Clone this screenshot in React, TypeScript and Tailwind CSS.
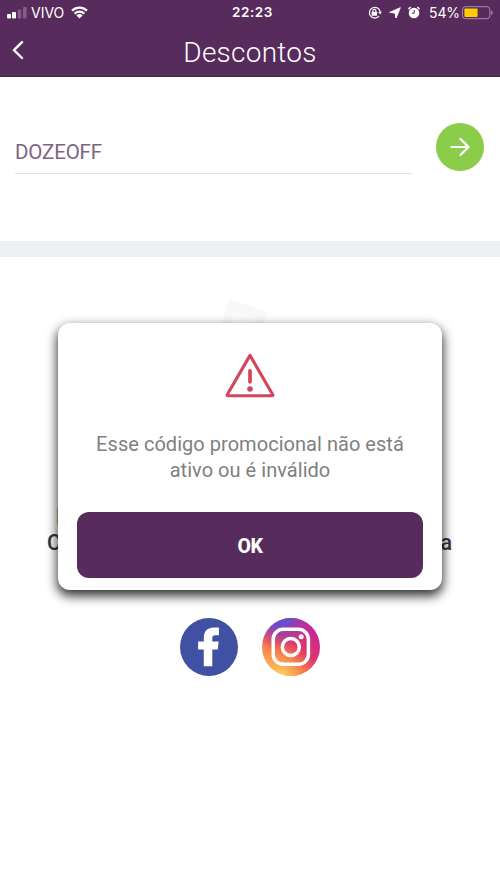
import { useState } from "react";

function SignalIcon() {
  return (
    <svg width="20" height="14" viewBox="0 0 20 14" fill="#fff" className="flex-none">
      <rect x="0" y="8" width="4" height="4.5" rx="1" />
      <rect x="5" y="6" width="4" height="6.5" rx="1" />
      <rect x="10.7" y="3.5" width="3.6" height="9" rx="1" opacity=".25" />
      <rect x="16" y="1" width="3.6" height="11.5" rx="1" opacity=".25" />
    </svg>
  );
}

function WifiIcon() {
  return (
    <svg width="17" height="13" viewBox="0 0 17 13" className="flex-none">
      <g fill="none" stroke="#fff" strokeWidth="2.2">
        <path d="M1 4.6a10.8 10.8 0 0 1 15 0" />
        <path d="M3.6 7.7a7 7 0 0 1 9.8 0" />
      </g>
      <path d="M5.4 9.5a4.5 4.5 0 0 1 6.2 0L8.5 12.6z" fill="#fff" />
    </svg>
  );
}

function StatusBar() {
  return (
    <div className="flex h-[25px] items-center">
      <div className="flex w-[200px] items-center pl-[7px]">
        <SignalIcon />
        <span className="ml-[4px] w-[33px] pt-px text-[14px] leading-none">VIVO</span>
        <span className="ml-[7px]">
          <WifiIcon />
        </span>
      </div>
      <span className="w-[105px] pt-px text-center text-[13.5px] leading-none font-semibold tracking-[0.6px]">
        22:23
      </span>
      <div className="flex flex-1 items-center">
        <svg width="14" height="14" viewBox="0 0 14 14" className="ml-[63px] flex-none">
          <path d="M11 10.2A5.4 5.4 0 1 1 12.2 6" fill="none" stroke="#fff" strokeWidth="1.2" />
          <path d="M10.2 5.8H14L12.2 8.6z" fill="#fff" />
          <rect x="3.7" y="5.8" width="5.4" height="4" rx=".5" fill="#fff" />
          <path d="M4.9 6V4.8a1.5 1.5 0 0 1 3 0V6" fill="none" stroke="#fff" strokeWidth="1.1" />
        </svg>
        <svg width="12" height="12" viewBox="0 0 12 12" className="ml-[7px] flex-none">
          <path d="M11.3.7 7 11 6 6 .7 5.4z" fill="#fff" stroke="#fff" strokeWidth="1" strokeLinejoin="round" />
        </svg>
        <svg width="14" height="14" viewBox="0 0 14 14" className="ml-[6px] flex-none">
          <circle cx="7" cy="7" r="5.3" fill="#fff" />
          <path d="M1.6 3.4A3 3 0 0 1 3.8 1.2M12.4 3.4A3 3 0 0 0 10.2 1.2" fill="none" stroke="#fff" strokeWidth="1.5" />
          <path d="M7.2 4v3.2H4.8" fill="none" stroke="#572b5b" strokeWidth="1" />
        </svg>
        <span className="ml-[8px] w-[30px] text-[14px] leading-none tracking-[-0.1px] whitespace-nowrap">54%</span>
        <svg width="32" height="14" viewBox="0 0 32 14" className="ml-[3px] flex-none">
          <rect x=".5" y=".7" width="27.4" height="12" rx="3" fill="none" stroke="#a98cab" strokeWidth="1" />
          <rect x="2.4" y="2.5" width="13.2" height="8.4" rx=".8" fill="#ffcc00" />
          <path d="M29.2 4.6c2 .7 2 3.7 0 4.4z" fill="#a98cab" />
        </svg>
      </div>
    </div>
  );
}

function Header() {
  return (
    <header className="h-[77px] flex-none border-b border-[#48204c] bg-[#572b5b] font-[Inter,sans-serif] text-white">
      <StatusBar />
      <div className="flex h-[51px] items-center">
        <button type="button" aria-label="Voltar" className="w-10 pl-3">
          <svg width="12" height="20" viewBox="0 0 12 20" fill="none" stroke="#fff" strokeWidth="2.4" strokeLinecap="round" strokeLinejoin="round">
            <path d="M10 1.2 2 9.2l8 7.8" />
          </svg>
        </button>
        <h1 className="flex-1 pr-[40px] pt-[4px] text-center font-[Roboto,sans-serif] text-[28px] leading-none font-light tracking-[0.25px]">
          Descontos
        </h1>
      </div>
    </header>
  );
}

function WarningIcon() {
  return (
    <svg width="50" height="46" viewBox="0 0 50 46" fill="none" stroke="#d3455b" strokeLinecap="round" strokeLinejoin="round" className="flex-none">
      <path d="M25 2.4 2.2 41.8q-.3.9.7.9H47.1q1 0 .7-.9z" strokeWidth="3.1" />
      <path d="M25 17.8v11" strokeWidth="3.7" />
      <circle cx="25" cy="36" r="2.8" fill="#d3455b" stroke="none" />
    </svg>
  );
}

function FacebookIcon() {
  return (
    <svg width="58" height="58" viewBox="0 0 58 58">
      <circle cx="29" cy="29" r="29" fill="#4051a3" />
      <path
        d="M23.8 48.2V31.4h-5.7v-8h5.7v-3.9c0-6.4 3.9-9.9 9.9-9.9h5.2v7.6h-3.3c-2.7 0-3.3 1.2-3.3 3.2v3h6.3l-.8 8h-5.5v16.8z"
        fill="#fff"
      />
    </svg>
  );
}

function InstagramIcon() {
  return (
    <svg width="58" height="58" viewBox="0 0 58 58">
      <defs>
        <linearGradient id="ig-base" x1=".85" y1=".25" x2=".25" y2=".95">
          <stop offset="0" stopColor="#c62a91" />
          <stop offset=".35" stopColor="#e0366c" />
          <stop offset=".7" stopColor="#f7744a" />
          <stop offset="1" stopColor="#fdb457" />
        </linearGradient>
        <radialGradient id="ig-warm" cx=".3" cy="1.02" r=".62">
          <stop offset="0" stopColor="#ffd56b" />
          <stop offset=".4" stopColor="#fdae53" stopOpacity=".8" />
          <stop offset="1" stopColor="#f7744a" stopOpacity="0" />
        </radialGradient>
        <radialGradient id="ig-cool" cx=".3" cy="-.08" r=".62">
          <stop offset="0" stopColor="#4f5bd5" />
          <stop offset=".35" stopColor="#6d4bcb" />
          <stop offset="1" stopColor="#b52fa5" stopOpacity="0" />
        </radialGradient>
      </defs>
      <circle cx="29" cy="29" r="29" fill="url(#ig-base)" />
      <circle cx="29" cy="29" r="29" fill="url(#ig-warm)" />
      <circle cx="29" cy="29" r="29" fill="url(#ig-cool)" />
      <g fill="none" stroke="#fff" strokeWidth="3.5">
        <rect x="11.2" y="11.3" width="35.2" height="35" rx="10" />
        <circle cx="28.8" cy="29" r="8.5" />
      </g>
      <circle cx="39.2" cy="18.7" r="2.5" fill="#fff" />
    </svg>
  );
}

function Alert({ onClose }: { onClose: () => void }) {
  return (
    <div
      role="alertdialog"
      className="absolute top-[323px] left-[58px] flex h-[267px] w-[384px] flex-col items-center rounded-[12px] bg-white px-[19px] pt-[30px] shadow-[0_5px_11px_1px_rgba(0,0,0,0.8)]"
    >
      <WarningIcon />
      <p className="mt-[32px] text-center text-[20px] leading-[26px] tracking-[0.04px] whitespace-nowrap text-[#808080]">
        Esse código promocional não está
        <br />
        ativo ou é inválido
      </p>
      <button
        type="button"
        onClick={onClose}
        className="mt-[29px] h-[66px] w-full flex-none rounded-[12px] bg-[#572b5b] pt-[3px] text-[19.5px] font-extrabold tracking-[-0.5px] text-white"
      >
        OK
      </button>
    </div>
  );
}

export default function App() {
  const [code, setCode] = useState("DOZEOFF");
  const [open, setOpen] = useState(true);

  return (
    <div className="relative flex h-[889px] w-[500px] flex-col overflow-hidden bg-white font-[Roboto,sans-serif]">
      <Header />

      <section className="flex h-[164px] flex-none items-start pr-4 pl-[15px]">
        <input
          value={code}
          onChange={(e) => setCode(e.target.value)}
          className="mt-[54px] h-[43px] w-[397px] border-b border-[#e1e1e1] text-[20.5px] tracking-[-0.15px] text-[#7b6580] outline-none"
        />
        <button
          type="button"
          aria-label="Aplicar"
          className="mt-[46px] ml-6 flex h-12 w-12 flex-none items-center justify-center rounded-full bg-[#8ccc4b]"
        >
          <svg width="20" height="20" viewBox="0 0 20 20" fill="none" stroke="#fff" strokeWidth="2.2" strokeLinecap="round" strokeLinejoin="round">
            <path d="M1.5 10h17M10.5 2l8 8-8 8" />
          </svg>
        </button>
      </section>

      <div className="h-4 flex-none bg-[#eef0f2]" />

      <section className="flex flex-col items-center">
        <svg width="60" height="60" viewBox="0 0 60 60" className="mt-[40px] mr-[10px]">
          <path d="M14 2 53 15 40 58 1 45z" fill="#f8f8f8" />
          <path d="M19 15 40 21 33 42 12 36z" fill="#fcfcfc" />
        </svg>
        <div className="mt-[147px] w-[404px] text-[21.5px] leading-[26px] font-medium text-[#39363b]">
          <p className="pl-[8px]">I</p>
          <p className="flex justify-between">
            <span className="-ml-px">C</span>
            <span>a</span>
          </p>
        </div>
        <div className="mt-[62px] flex gap-6">
          <FacebookIcon />
          <InstagramIcon />
        </div>
      </section>

      {open && <Alert onClose={() => setOpen(false)} />}
    </div>
  );
}
